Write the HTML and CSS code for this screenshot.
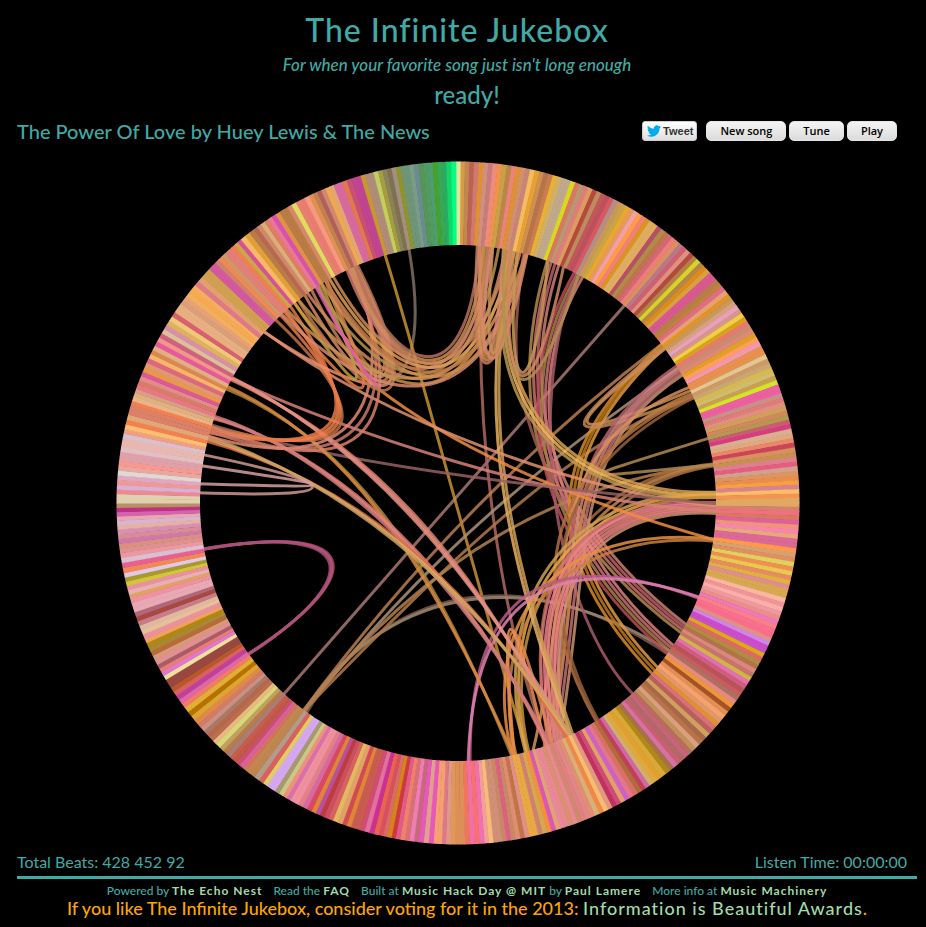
FILE: index.html
```html
<!DOCTYPE html>
<html lang="en">
<head>
<meta charset="utf-8">
<meta name="viewport" content="width=device-width, initial-scale=1">
<title>The Infinite Jukebox</title>
<link rel="stylesheet" href="styles.css">
</head>
<body>
<header class="masthead">
  <h1 class="title">The Infinite Jukebox</h1>
  <p class="tagline">For when your favorite song just isn't long enough</p>
</header>
<main>
  <p class="status">ready!</p>
  <div class="toolbar">
    <h2 class="song">The Power Of Love by Huey Lewis &amp; The News</h2>
    <div class="controls">
      <a class="tweet" href="#tweet"><svg class="bird" viewBox="0 0 24 24" aria-hidden="true"><path d="M23.953 4.57a10 10 0 01-2.825.775 4.958 4.958 0 002.163-2.723c-.951.555-2.005.959-3.127 1.184a4.92 4.92 0 00-8.384 4.482C7.69 8.095 4.067 6.13 1.64 3.162a4.822 4.822 0 00-.666 2.475c0 1.71.87 3.213 2.188 4.096a4.904 4.904 0 01-2.228-.616v.06a4.923 4.923 0 003.946 4.827 4.996 4.996 0 01-2.212.085 4.936 4.936 0 004.604 3.417 9.867 9.867 0 01-6.102 2.105c-.39 0-.779-.023-1.17-.067a13.995 13.995 0 007.557 2.209c9.053 0 13.998-7.496 13.998-13.985 0-.21 0-.42-.015-.63A9.935 9.935 0 0024 4.59z"/></svg>Tweet</a>
      <button class="btn" type="button">New song</button>
      <button class="btn" type="button">Tune</button>
      <button class="btn" type="button">Play</button>
    </div>
  </div>
  <div class="stage">
    <svg class="wheel" id="wheel" viewBox="116 161 684 684" role="img" aria-label="Beat map"></svg>
  </div>
  <div class="stats">
    <span>Total Beats: 428 452 92</span>
    <span>Listen Time: 00:00:00</span>
  </div>
</main>
<footer class="footer">
  <p class="credits">
    <span>Powered by <a href="#echonest">The Echo Nest</a></span>
    <span>Read the <a href="#faq">FAQ</a></span>
    <span>Built at <a href="#hackday">Music Hack Day @ MIT</a> by <a href="#paul">Paul Lamere</a></span>
    <span>More info at <a href="#machinery">Music Machinery</a></span>
  </p>
  <p class="vote">If you like The Infinite Jukebox, consider voting for it in the 2013: <a href="#awards">Information is Beautiful Awards</a>.</p>
</footer>
<script src="wheel.js"></script>
</body>
</html>
```
FILE: styles.css
```css
* {
  box-sizing: border-box;
}

body {
  margin: 0;
  padding: 10px 9px 8px 17px;
  background: #000;
  color: #40aaa6;
  font-family: Lato, "Liberation Sans", sans-serif;
}

h1,
h2,
p {
  margin: 0;
  font-weight: 500;
}

.masthead {
  padding-right: 20px;
  text-align: center;
}

.title {
  font-size: 32px;
  line-height: 40px;
  letter-spacing: 1px;
}

.tagline {
  font-size: 17px;
  line-height: 30px;
  font-style: italic;
}

.status {
  font-size: 24px;
  line-height: 30px;
  text-align: center;
}

.toolbar {
  display: flex;
  align-items: center;
  justify-content: space-between;
  min-height: 42px;
  padding-right: 20px;
}

.song {
  font-size: 20px;
  line-height: 24px;
}

.controls {
  display: flex;
  gap: 3px;
}

.tweet,
.btn {
  height: 20px;
  border: 1px solid #ccc;
  background: linear-gradient(#f4f4f4, #dcdcdc);
  color: #000;
}

.tweet {
  display: flex;
  align-items: center;
  gap: 2px;
  margin-right: 6px;
  padding: 0 3px 0 4px;
  border-radius: 3px;
  background: linear-gradient(#fff, #dedede);
  color: #333;
  font: bold 11px "Liberation Sans", sans-serif;
  text-decoration: none;
}

.bird {
  width: 14px;
  height: 14px;
  fill: #00aced;
}

.btn {
  padding: 0 13px;
  border-color: #e4e4e4;
  border-radius: 5px;
  font: 600 11px/16px "Open Sans", sans-serif;
}

.stage {
  padding: 9px 18px 0 0;
}

.wheel {
  display: block;
  width: 100%;
  max-width: 684px;
  margin: 0 auto;
}

.strand {
  fill: none;
  stroke-width: 3px;
  stroke-opacity: 0.85;
}

.stats {
  display: flex;
  justify-content: space-between;
  padding: 5px 10px 2px 0;
  font-size: 16px;
  line-height: 24px;
}

.footer {
  border-top: 3px solid #40aaa6;
  padding-top: 4px;
  text-align: center;
}

.footer a {
  color: #a0dcaa;
  letter-spacing: 1px;
  text-decoration: none;
}

.credits {
  display: flex;
  flex-wrap: wrap;
  justify-content: center;
  column-gap: 11px;
  font-size: 12px;
  line-height: 15px;
}

.credits a {
  font-weight: bold;
}

.vote {
  color: #ffa500;
  font-size: 18px;
  line-height: 20px;
}
```
FILE: wheel.js
```js
const NS = 'http://www.w3.org/2000/svg';
const CX = 458, CY = 503, OUTER = 341.5, INNER = 258;
const MID_SPREAD = 0.6, END_SPREAD = 0.75;
const wheel = document.getElementById('wheel');

// Beat tiles, clockwise from the top: each row ends at the given angle.
const START = 0.34;
const tiles = [
  [19.3, 'd99a42 c08850 bd6252 cf7a70 e09030 d09080 c87c78 ec8c80 f0924c c8a048 bc8448 e88478 e09030 d09070 c88478 f2bc60 e8a030 cc9050 b87448 c87c50 e8b034 d0b068 c0a88c c0a88c'],
  [34.2, 'd8d820 d87860 b89870 e07c7c dc9c60 b44a3c bc8c60 c05858 bc5060 d85860 b48c88 c89858 c8a448 e8a830 e89858 f0a0a8 ff9c40 f08078 dc9420'],
  [44.4, 'e0ac60 e0ac60 b85064 b08c4c c07448 d06878 f07c78 d89060 b87888 d06070 e09080 b04c3c b88048'],
  [60.1, 'd4d428 b88448 dc8c18 d8a040 d85890 d85890 b87c4c c08040 e06c88 e8a070 e09428 c89858 d8a080 e8a0bc d8958c f0d040 d8a020 e87870 c88c70 e08878'],
  [63.4, 'e0a020 ff9c60 f098b0 e89050'],
  [69.65, 'e89050 e0c890 d09868 c8a870 d8b850 d0bc70 c8a050 d4e428'],
  [77.4, 'ed60a0 ed60a0 c89088 e07c78 e09080 d0a058 d0885c b49850 c85c70 d83c80'],
  [80.6, 'd8b090 e0a880 e88868 cc4458'],
  [84.6, 'd89060 c89050 dc8090 e85c80 d0a090'],
  [88.4, 'dc9460 e88c50 f8a040 d88490 fcbc68'],
  [92.1, 'f49450 e0a860 e0a860 d88070 f07080'],
  [97.6, 'd87860 e0609c f09478 f884b0 e8a878 dc6898 dc6898'],
  [100.75, 'ff9848 d8a070 e0905c e0d060'],
  [106.2, 'f09050 e8c850 e88c60 e0b040 e08c90 d8a850 d8a850'],
  [114, 'f8b8a0 f09498 f8b0a8 f098a0 e89088 f078b8 f88088 f87090 fa6c88 e09088'],
  [116.1, 'cc88e0 d048d0 c850c8'],
  [122.2, 'dca818 dc6868 b08c40 b07448 d88880 c87468 d0b448 e070b0'],
  [127.7, 'd05c80 b85458 c85c60 a87460 e88880 e89838 a85028'],
  [131.7, 'e09050 f8a070 e09868 e09030 d8707c'],
  [137.5, 'b86058 d0a060 a86848 b87448 d8a080 c09058 b86c60'],
  [141.6, 'c86478 b06868 c86070 d870a8 a87048'],
  [145.1, 'b08818 d8a838 e0a030 e0a83c'],
  [147.4, 'd0b068 d068a8 c04058'],
  [153.1, 'b06c38 d87068 e07888 d060c8 e0a068 d04c78 c03060'],
  [156.3, 'e09880 f8bc70 f08848 d8b078'],
  [163.3, 'e09070 e08888 e08080 d08870 e88890 d89070 e88890 e88898 e0a078'],
  [167.9, 'dc58b0 f09040 d4a850 d08070 e8a844 e8a844'],
  [171.8, 'e09088 c07448 e08c70 c88868 dc6080'],
  [175.5, 'c88868 d09078 d09078 f8bc78 f0a098'],
  [178.8, 'f070b0 f87070 f070a8 f07460'],
  [181.3, 'dc9058 dc9058 e09858'],
  [184.1, 'e09888 dc7888 f4a070 f4a070'],
  [187.4, 'e858b8 e0a090 e858b8 c86880'],
  [190.5, 'f07cb4 d87078 f08068 e05c88'],
  [193.4, 'd03840 d48418 d86c64 d85060'],
  [196.7, 'e86450 cc3090 e070a0 d04c70'],
  [199.8, 'c85c50 c85c50 e08438 d04c50'],
  [202.3, 'e0a068 e4b860 d86060'],
  [205.4, 'c85060 c03c3c b850a0 e08438'],
  [207.9, 'd84860 d868a0 e08088'],
  [211.6, 'f0909c f0909c d870b0 f09078 c8c888'],
  [214.8, 'a89870 d4a8f0 d4a8f0 e0cc60'],
  [218.3, 'd86060 b09c88 c08450 c08850'],
  [221.9, 'd87060 d860a0 c85068 c05848 c85c48'],
  [225.8, 'a87c78 b87c48 c0a060 d8d878 e8b880'],
  [229.6, 'b87050 b86848 a87868 cc9080 d07c68'],
  [233.1, 'e08848 dca430 b87000 e0b030'],
  [236.4, 'f07c68 e068a0 c040a0 d86060'],
  [238.8, 'b85828 984840 984840'],
  [241.7, 'f0e0a0 e078d0 e87c78 a85c68'],
  [244.2, 'e09090 d89880 b86c34'],
  [246.5, 'a88838 b08810 f0a060'],
  [248.9, 'ec90a0 e8c098 e0b8a0'],
  [251.3, 'c87c88 a84840 b06878'],
  [253.7, 'e8a8b4 e8a8b4 f090a4'],
  [255.9, 'e0a068 e8b0b0 e890a0'],
  [258.1, 'd4c438 a89830 e0c8e8'],
  [260.7, 'f08858 e86090 d8c0d0'],
  [265.5, 'ec98a0 e09090 d89080 d078a8 d88c98 d890b0'],
  [267.7, 'e8b0a0 d8b4d0 e8a8b0'],
  [269.9, 'd464b0 c03080 b89068'],
  [273, 'e0d0b0 e0d0b0 f08890 d8b0d4'],
  [275.4, 'f09898 e0a8c0 e0d8d4'],
  [278.65, 'e8a8a0 f89890 e0a0a8 e0a0a8'],
  [281.7, 'e0c0c4 e8b8b0 e8b8b0 d8c0d0'],
  [284.1, 'f0a080 f8c070 f48050'],
  [286.7, 'e0a878 dc8068 dc8068'],
  [289.5, 'f48050 e8b488 e0b080 d8a080'],
  [292.6, 'e87888 d87c68 e08c88 dc5898'],
  [295.1, 'e89848 e09870 dc6880'],
  [296.6, 'f8b468 d88850'],
  [301.4, 'e0b080 e858a0 f09888 d06080 dcc098 d890a8'],
  [305.65, 'e0b060 f0c878 d86070 e8b080 e8b080'],
  [309.6, 'd8a078 e8a078 f0b060 f8a850 f0b060'],
  [313.2, 'e07888 e0a070 d0a050 d0a050'],
  [316.9, 'd458a0 d458a0 d08070 f08850 d09868'],
  [320.5, 'e08078 e08078 f08050 c8a848 d85098'],
  [323.2, 'f8b868 e0a038 b87c48'],
  [326.9, 'b86850 d08868 d8b078 e07c60 e87898'],
  [330.8, 'd850b0 e09048 b87c44 b87c44 d88868'],
  [334.1, 'e0dc60 e88070 e87c70 f89880'],
  [337.1, 'e09050 c08050 b06058 d08870'],
  [340.1, 'f0a850 e0a870 d868a0 d868a0'],
  [343.4, 'e07850 c85070 c04490 c04490'],
  [346.4, 'c89830 b08c78 b08c78 c0d060'],
  [349.5, 'a89c40 888458 807050 a09080'],
  [352.5, '909428 709478 709478 789c88'],
  [355.7, '688c90 589458 509c60 509c70'],
  [358, '44a428 38a858 30a860'],
  [359.7, '10d868 00ff84'],
  [360.34, 'd8e8a0']
];

// Links between similar beats: curve points, colours (one strand each),
// then the spread at the start (degrees), the middle (px) and the end (degrees).
const links = [
  [[409, 249, 425, 340, 410, 390, 370, 383], '807060', 0, 0, 0],
  [[624, 306, 560, 378, 400, 562, 284, 694], 'a87870', 0, 0, 0],
  [[385, 255, 415, 350, 470, 560, 527, 752], 'c89030', 0, 0, 0],
  [[484, 246, 470, 420, 500, 620, 547, 745], 'b06860', 0, 0, 0],
  [[305, 713, 380, 590, 520, 555, 668, 652], '805850 9c8870', 0.4, 3, 0.5],
  [[681, 366, 560, 450, 430, 550, 304, 712], 'a89078', 0, 0, 0],
  [[662, 344, 550, 430, 430, 540, 303, 711], 'b87c50', 0, 0, 0],
  [[694, 398, 570, 440, 450, 560, 303, 711], 'b07848', 0, 0, 0],
  [[713, 465, 570, 480, 430, 550, 303, 711], 'b08050', 0, 0, 0],
  [[552, 265, 510, 400, 540, 520, 685, 630], 'b08850 c87068 b86068 c88070', 1.8, 12, 1.4],
  [[578, 276, 510, 390, 540, 540, 671, 650], 'b84c58 a88048 c87078 d88078', 1.4, 12, 1.4],
  [[575, 276, 520, 420, 560, 620, 632, 693], 'a85868', 0, 0, 0],
  [[523, 254, 510, 360, 510, 390, 560, 500], 'a05c50', 0, 0, 0],
  [[664, 345, 560, 440, 530, 540, 655, 671], 'd88828 b87818 e09840', 0.6, 8, 1.2],
  [[665, 347, 548, 440, 562, 445, 692, 394], 'c08850 d08c58', 0.4, 4, 1],
  [[713, 465, 590, 480, 520, 580, 556, 741], 'a86838 c08850 a87040', 0.3, 14, 2],
  [[680, 370, 560, 450, 585, 540, 550, 743], 'b86070 c88880 d88080 c07078 c89070', 1.6, 14, 2.4],
  [[692, 390, 540, 450, 585, 560, 538, 748], 'd89058 c08040', 1, 10, 2],
  [[694, 396, 520, 480, 540, 620, 597, 721], 'b07040 986038', 0.4, 6, 0.3],
  [[709, 438, 560, 485, 570, 478, 713, 465], 'b08850', 0, 0, 0],
  [[509, 250, 480, 400, 560, 500, 716, 495], 'c09850 f0b860 d8a050', 0.8, 7, 0.8],
  [[716, 495, 570, 490, 490, 610, 527, 752], 'd0a050 e8a848 c89040', 0.6, 10, 0.5],
  [[716, 508, 565, 500, 532, 600, 556, 741], 'd07078 f08090 e88080 e08878 f08088 d09070', 1.6, 18, 2.6],
  [[714, 540, 560, 525, 480, 620, 514, 755], 'e89040 c88040', 0.3, 7, 0.6],
  [[512, 251, 475, 420, 510, 560, 571, 734], 'e8b060 d0a058', 0.4, 3, 0.3],
  [[513, 755, 500, 590, 510, 590, 548, 744], 'f09050 e08850', 0.3, 4, 1],
  [[469, 761, 470, 565, 580, 555, 700, 598], 'b85c88 e080b0', 0.3, 6, 0.2],
  [[295, 303, 360, 400, 500, 480, 714, 540], 'f08c40', 0, 0, 0],
  [[264, 332, 390, 425, 590, 495, 716, 506], 'e09070', 0, 0, 0],
  [[232, 379, 340, 430, 560, 505, 716, 511], 'd88078', 0, 0, 0],
  [[215, 426, 340, 465, 560, 490, 716, 504], '986060', 0, 0, 0],
  [[227, 388, 350, 440, 430, 560, 513, 755], 'a88838 e08840', 0.4, 4, 0.3],
  [[232, 379, 380, 450, 480, 580, 566, 736], 'd88070 e88880 e09080', 0.4, 6, 1.2],
  [[215, 418, 330, 450, 470, 580, 548, 744], 'e07870 e88880 c87878', 0.4, 6, 0.6],
  [[209, 439, 340, 480, 460, 570, 569, 735], 'd87040 e8a868 c8a060', 0.8, 6, 0.8],
  [[205, 455, 350, 485, 350, 498, 201, 493], 'd09890', 0, 0, 0],
  [[203, 466, 350, 488, 350, 488, 202, 484], 'd8a0a0', 0, 0, 0],
  [[204, 549, 370, 520, 364, 580, 247, 655], 'a84c70 c05880 a85078', 0.1, 4, 0.1],
  [[284, 314, 350, 390, 390, 470, 210, 430], 'c07048 e87c48 f08050 e87840', 3, 12, 1],
  [[352, 269, 395, 360, 400, 500, 209, 431], 'd88068 c87868 e08870', 1, 18, 1.5],
  [[264, 332, 320, 370, 350, 380, 372, 385], 'e89070', 0, 0, 0],
  [[312, 290, 380, 430, 425, 400, 354, 268], 'b87850 d88868 c88060 d89070 c08050', 5, 20, 1.2],
  [[290, 308, 380, 425, 375, 400, 325, 283], 'e07c48 c0a040', 2, 12, 1],
  [[352, 269, 385, 370, 470, 425, 486, 246], 'c87868 d88870 c89050 b87060', 1.4, 12, 2],
  [[312, 290, 390, 405, 470, 420, 502, 249], 'c89048 d08858 b89050 c88060', 5, 14, 3],
  [[285, 313, 380, 410, 480, 420, 523, 255], 'd88868 c89058', 1, 8, 1],
  [[328, 281, 400, 400, 475, 410, 517, 253], 'd09050 c07848 d8a050 d08858', 2, 14, 2.5],
  [[316, 287, 350, 350, 365, 375, 378, 386], 'e05cb0', 0, 0, 0],
  [[484, 246, 470, 396, 495, 396, 514, 252], 'c88060 d89058 c08848 d88878', 2, 10, 3.4],
  [[486, 246, 480, 390, 498, 394, 520, 254], 'd88868 c89058', 2, 6, 2],
  [[510, 251, 500, 400, 530, 430, 562, 269], 'b09050 d08860 c89858', 2, 7, 5]
];

function add(tag, attrs) {
  const el = document.createElementNS(NS, tag);
  for (const key in attrs) el.setAttribute(key, attrs[key]);
  wheel.appendChild(el);
}

function polar(radius, degrees) {
  const a = degrees * Math.PI / 180;
  return [CX + radius * Math.sin(a), CY - radius * Math.cos(a)];
}

// Turns a point about the centre and seats it just under the ring.
function anchor(x, y, degrees) {
  const angle = Math.atan2(x - CX, CY - y) * 180 / Math.PI;
  return polar(INNER + 3, angle + degrees);
}

for (const [p, palette, startSpread, midSpread, endSpread] of links) {
  const colors = palette.split(' ');
  const mx = (p[2] + p[4]) / 2 - CX, my = (p[3] + p[5]) / 2 - CY;
  const len = Math.hypot(mx, my) || 1;
  const endsOnRing = Math.hypot(p[6] - CX, p[7] - CY) > INNER - 15;
  colors.forEach((color, i) => {
    const t = colors.length > 1 ? 2 * i / (colors.length - 1) - 1 : 0;
    const ox = mx / len * midSpread * t * MID_SPREAD, oy = my / len * midSpread * t * MID_SPREAD;
    const a = anchor(p[0], p[1], startSpread * t * END_SPREAD);
    const b = endsOnRing ? anchor(p[6], p[7], -endSpread * t * END_SPREAD) : [p[6], p[7]];
    add('path', {
      class: 'strand',
      stroke: '#' + color,
      d: `M${a} C${p[2] + ox},${p[3] + oy} ${p[4] + ox},${p[5] + oy} ${b}`
    });
  });
}

let from = START;
for (const [to, palette] of tiles) {
  const colors = palette.split(' ');
  const step = (to - from) / colors.length;
  colors.forEach((color, i) => {
    const a = from + i * step, b = a + step + 0.1;
    add('path', {
      fill: '#' + color,
      d: `M${polar(INNER, a)} L${polar(OUTER, a)} A${OUTER},${OUTER} 0 0 1 ${polar(OUTER, b)} L${polar(INNER, b)} A${INNER},${INNER} 0 0 0 ${polar(INNER, a)}Z`
    });
  });
  from = to;
}
```
